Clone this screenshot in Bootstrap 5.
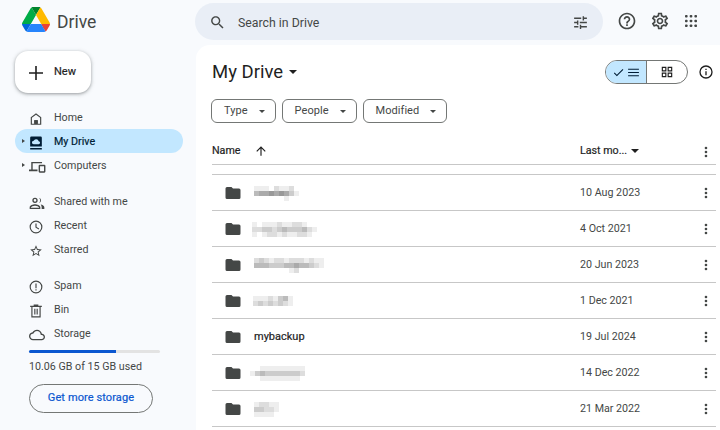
<!DOCTYPE html>
<html>
<head>
    <title>My Drive</title>
    <!-- Bootstrap CSS -->
    <link href="https://cdn.jsdelivr.net/npm/bootstrap@5.3.0/dist/css/bootstrap.min.css" rel="stylesheet">
    <style>
        html, body { height: 430px; overflow: hidden; }
        body { background: #f8fafd; color: #1f1f1f; font-family: Roboto, "Liberation Sans", sans-serif; font-size: 10.7px; }
        svg { display: block; flex: none; fill: currentColor; }
        .medium-text { -webkit-text-stroke: .2px currentColor; }

        /* sidebar */
        .side-col { width: 196px; flex: none; height: 430px; }
        .brand { height: 45px; padding: 7px 0 0 22px; gap: 7px; }
        .brand-name { font-size: 17.5px; color: #444746; line-height: 28px; margin-top: 1px; }
        .new-btn { width: 76px; height: 42px; margin: 6px 0 12px 15px; border-radius: 13px; background: #fff; box-shadow: 0 1px 3px rgba(60,64,67,.4), 0 1px 4px 1px rgba(60,64,67,.12); padding: 1px 0 0 14px; gap: 11px; font-size: 11px; }
        .side-list { padding: 0 13px 0 15px; margin-bottom: 12px; }
        .side-list.first-list { margin-bottom: 13px; }
        .side-item { height: 24px; border-radius: 12px; padding: 1px 0 0 14px; gap: 11px; color: #444746; position: relative; }
        .first-list .side-item { padding-top: 3px; }
        .side-item.current { background: #c2e7ff; color: #001d35; }
        .wide-icon { margin-right: -2px; }
        .laptop-icon { margin-right: -3px; }
        .expand-mark { position: absolute; left: 7px; top: 10px; border-left: 3px solid #444746; border-top: 2.5px solid transparent; border-bottom: 2.5px solid transparent; }
        .quota { margin: 0 36px 0 29px; }
        .quota-track { height: 3px; background: #e3e3e3; margin-top: 4px; border-radius: 2px; }
        .quota-fill { height: 3px; width: 66.5%; background: #0b57d0; border-radius: 2px 0 0 2px; }
        .quota-text { margin-top: 7px; color: #444746; line-height: 13px; white-space: nowrap; }
        .storage-btn { width: 124px; height: 29px; margin-top: 11px; border: 1px solid #747775; border-radius: 15px; color: #0b57d0; background: transparent; padding: 0; font-size: 11px; letter-spacing: .1px; }

        /* top bar */
        .top-bar { height: 45px; }
        .search-box { width: 408px; height: 37px; margin: 3px 0 0 -1px; border-radius: 19px; background: #e9eef6; padding: 2px 14px 0 14px; color: #444746; font-size: 12.3px; }
        .search-box .search-text { margin: 1px 0 0 12px; }
        .top-icons { margin: -3px 0 0 14px; gap: 13px; color: #444746; }
        .apps-icon { margin-left: 1px; }

        /* main panel */
        .drive-panel { height: 385px; background: #fff; border-radius: 14px 0 0 0; padding: 0 4px 0 16px; overflow: hidden; }
        .title-row { height: 54px; }
        .title-text { font-size: 18.5px; color: #1f1f1f; margin: 0; gap: 6px; font-weight: 400; }
        .title-caret { border-top: 4px solid #1f1f1f; border-left: 4px solid transparent; border-right: 4px solid transparent; }
        .view-toggle { width: 83px; height: 24px; border: 1px solid #747775; border-radius: 12px; overflow: hidden; margin-left: auto; }
        .view-list { width: 41px; height: 100%; background: #c2e7ff; border-right: 1px solid #747775; gap: 2px; color: #001d35; }
        .view-grid { flex: 1; height: 100%; color: #1f1f1f; }
        .info-btn { margin: 0 2px 0 10px; }
        .filter-row { gap: 6px; height: 24px; margin-left: -1px; }
        .filter-chip { height: 24px; border: 1px solid #747775; border-radius: 6px; background: #fff; color: #444746; padding: 0 10px 0 12px; gap: 11px; font-size: 11px; letter-spacing: .05px; }
        .chip-caret { border-top: 3px solid #444746; border-left: 3px solid transparent; border-right: 3px solid transparent; }
        .head-caret { border-top: 4px solid #1f1f1f; border-left: 4px solid transparent; border-right: 4px solid transparent; }
        .head-row { height: 42px; padding-top: 16px; border-bottom: 1px solid #c7c7c7; }
        .head-spacer { height: 10px; border-bottom: 1px solid #c7c7c7; }
        .file-row { height: 36px; border-bottom: 1px solid #c7c7c7; color: #444746; padding-top: 1px; }
        .name-cell { width: 368px; flex: none; padding-left: 12px; gap: 12px; }
        .name-cell.no-icon { padding: 0; gap: 14px; }
        .date-cell { flex: 1; }
        .file-name { color: #1f1f1f; font-size: 11px; }
        .mosaic { filter: blur(.6px); }
        .mosaic-line { height: 5px; }
        .mosaic-line i { display: block; width: 5px; height: 5px; }
        .pull-1 { margin-left: -1px; }
        .pull-2 { margin-left: -2px; }
        .pull-4 { margin-left: -4px; }
        .more-btn { color: #444746; margin-right: 2px; }
    </style>
</head>
<body>
<div class="d-flex">
    <!-- Боковая панель -->
    <div class="side-col">
        <div class="brand d-flex align-items-start">
            <svg width="28" height="25" viewBox="0 0 87.3 78">
                <path d="m6.6 66.85 3.85 6.65c.8 1.4 1.95 2.5 3.3 3.3l13.75-23.8h-27.5c0 1.55.4 3.1 1.2 4.5z" fill="#0066da"/>
                <path d="m43.65 25-13.75-23.8c-1.35.8-2.5 1.9-3.3 3.3l-25.4 44a9.06 9.06 0 0 0 -1.2 4.5h27.5z" fill="#00ac47"/>
                <path d="m73.55 76.8c1.35-.8 2.5-1.9 3.3-3.3l1.6-2.75 7.65-13.25c.8-1.4 1.2-2.95 1.2-4.5h-27.502l5.852 11.5z" fill="#ea4335"/>
                <path d="m43.65 25 13.75-23.8c-1.35-.8-2.9-1.2-4.5-1.2h-18.5c-1.6 0-3.15.45-4.5 1.2z" fill="#00832d"/>
                <path d="m59.8 53h-32.3l-13.75 23.8c1.35.8 2.9 1.2 4.5 1.2h50.8c1.6 0 3.15-.45 4.5-1.2z" fill="#2684fc"/>
                <path d="m73.4 26.5-12.7-22c-.8-1.4-1.95-2.5-3.3-3.3l-13.75 23.8 16.15 28h27.45c0-1.55-.4-3.1-1.2-4.5z" fill="#ffba00"/>
            </svg>
            <span class="brand-name">Drive</span>
        </div>

        <div class="new-btn d-flex align-items-center">
            <svg width="14" height="14" viewBox="0 0 14 14"><path d="M6.2 0h1.6v6.2H14v1.6H7.8V14H6.2V7.8H0V6.2h6.2z"/></svg>
            <span class="medium-text">New</span>
        </div>

        <div class="side-list first-list">
            <div class="side-item d-flex align-items-center">
                <svg width="14" height="14" viewBox="0 0 24 24"><path d="M12 2 3 9v13h18V9l-9-7zm7 18h-4v-6H9v6H5v-10l7-5.4 7 5.4v10z"/><path d="M9 14h6v6H9z"/></svg>
                <span>Home</span>
            </div>
            <div class="side-item current d-flex align-items-center">
                <i class="expand-mark"></i>
                <svg width="14" height="14" viewBox="0 0 24 24"><path d="M4 1h16a2 2 0 0 1 2 2v15H2V3a2 2 0 0 1 2-2zm4 13h8.2a2.6 2.6 0 0 0 .4-5.2A4.6 4.6 0 0 0 8 8a3 3 0 0 0 0 6zM2 20.5h20V23H2z"/></svg>
                <span class="medium-text">My Drive</span>
            </div>
            <div class="side-item d-flex align-items-center">
                <i class="expand-mark"></i>
                <svg class="laptop-icon" width="17" height="14" viewBox="0 0 30 24"><path d="M4 3h19v2.500H6.500v11H15v3H0v-3h4V3z"/><path d="M19 8h8a2 2 0 0 1 2 2v10a2 2 0 0 1-2 2h-8a2 2 0 0 1-2-2V10a2 2 0 0 1 2-2zm.5 2.500v9h7v-9z"/></svg>
                <span>Computers</span>
            </div>
        </div>

        <div class="side-list">
            <div class="side-item d-flex align-items-center">
                <svg class="wide-icon" width="16" height="16" viewBox="0 0 24 24"><path d="M9 12a4 4 0 1 0 0-8 4 4 0 0 0 0 8zm0-6a2 2 0 1 1 0 4 2 2 0 0 1 0-4zm0 8c-3 0-8 1.500-8 4.500V21h16v-2.500C17 15.500 12 14 9 14zm-6 5v-.5c0-.9 3.400-2.500 6-2.500s6 1.600 6 2.500v.5H3zM15 4.100a4 4 0 0 1 0 7.800 5.800 5.800 0 0 0 0-7.800zM17.500 14.300c2.700.5 5.500 1.800 5.500 4.200V21h-4v-2.500c0-1.800-.6-3.100-1.500-4.200z"/></svg>
                <span>Shared with me</span>
            </div>
            <div class="side-item d-flex align-items-center">
                <svg width="14" height="14" viewBox="0 0 24 24"><path d="M12 1a11 11 0 1 0 0 22 11 11 0 0 0 0-22zm0 20a9 9 0 1 1 0-18 9 9 0 0 1 0 18z"/><path d="M13 6h-2v7l5.500 3.300 1-1.600-4.500-2.700z"/></svg>
                <span>Recent</span>
            </div>
            <div class="side-item d-flex align-items-center">
                <svg width="14" height="14" viewBox="0 0 24 24"><path d="M22 9.240l-7.190-.62L12 2 9.190 8.630 2 9.240l5.460 4.730L5.820 21 12 17.270 18.180 21l-1.630-7.030L22 9.240zM12 15.400l-3.760 2.270 1-4.280-3.320-2.880 4.380-.38L12 6.100l1.710 4.040 4.380.38-3.320 2.880 1 4.280L12 15.400z"/></svg>
                <span>Starred</span>
            </div>
        </div>

        <div class="side-list mb-0">
            <div class="side-item d-flex align-items-center">
                <svg width="14" height="14" viewBox="0 0 24 24"><path d="M12 1a11 11 0 1 0 0 22 11 11 0 0 0 0-22zm0 20a9 9 0 1 1 0-18 9 9 0 0 1 0 18z"/><path d="M11 6h2v8h-2zM11 16h2v2h-2z"/></svg>
                <span>Spam</span>
            </div>
            <div class="side-item d-flex align-items-center">
                <svg width="14" height="14" viewBox="0 0 24 24"><path d="M8 1h8v2h6v2h-2v18H4V5H2V3h6V1zM6 5v16h12V5H6zm3 3h2v10H9V8zm4 0h2v10h-2V8z"/></svg>
                <span>Bin</span>
            </div>
            <div class="side-item d-flex align-items-center">
                <svg class="wide-icon" width="16" height="16" viewBox="0 0 24 24"><path d="M19.350 10.040C18.670 6.590 15.640 4 12 4 9.110 4 6.600 5.640 5.350 8.040 2.340 8.360 0 10.910 0 14c0 3.310 2.690 6 6 6h13c2.760 0 5-2.240 5-5 0-2.640-2.050-4.780-4.650-4.960zM19 18H6c-2.210 0-4-1.790-4-4 0-2.050 1.530-3.760 3.560-3.970l1.070-.11.5-.95C8.080 7.140 9.940 6 12 6c2.620 0 4.880 1.860 5.390 4.430l.3 1.500 1.530.11c1.560.1 2.780 1.410 2.780 2.960 0 1.650-1.350 3-3 3z"/></svg>
                <span>Storage</span>
            </div>
        </div>

        <div class="quota">
            <div class="quota-track"><div class="quota-fill"></div></div>
            <div class="quota-text">10.06 GB of 15 GB used</div>
            <button class="storage-btn d-block medium-text">Get more storage</button>
        </div>
    </div>

    <!-- Основная панель -->
    <div class="flex-grow-1">
        <div class="top-bar d-flex align-items-center">
            <div class="search-box d-flex align-items-center align-self-start">
                <svg width="17" height="17" viewBox="0 0 24 24"><path d="M15.500 14h-.79l-.28-.27C15.410 12.590 16 11.110 16 9.500 16 5.910 13.090 3 9.500 3S3 5.910 3 9.500 5.910 16 9.500 16c1.610 0 3.090-.59 4.230-1.570l.27.28v.79l5 4.990L20.490 19l-4.990-5zm-6 0C7.010 14 5 11.990 5 9.500S7.010 5 9.500 5 14 7.010 14 9.500 11.990 14 9.500 14z"/></svg>
                <span class="search-text flex-grow-1">Search in Drive</span>
                <svg width="17" height="17" viewBox="0 0 24 24"><path d="M3 17v2h6v-2H3zM3 5v2h10V5H3zm10 16v-2h8v-2h-8v-2h-2v6h2zM7 9v2H3v2h4v2h2V9H7zm14 4v-2H11v2h10zm-6-4h2V7h4V5h-4V3h-2v6z"/></svg>
            </div>
            <div class="top-icons d-flex align-items-center">
                <svg width="20" height="20" viewBox="0 0 24 24"><path d="M11 18h2v-2h-2v2zm1-16C6.480 2 2 6.480 2 12s4.480 10 10 10 10-4.480 10-10S17.520 2 12 2zm0 18c-4.410 0-8-3.590-8-8s3.590-8 8-8 8 3.590 8 8-3.590 8-8 8zm0-14c-2.210 0-4 1.790-4 4h2c0-1.100.9-2 2-2s2 .9 2 2c0 2-3 1.750-3 5h2c0-2.250 3-2.500 3-5 0-2.210-1.790-4-4-4z"/></svg>
                <svg width="20" height="20" viewBox="0 0 24 24"><path d="M19.430 12.980c.04-.32.07-.64.07-.98 0-.34-.03-.66-.07-.98l2.110-1.650c.19-.15.24-.42.12-.64l-2-3.460c-.09-.16-.26-.25-.44-.25-.06 0-.12.01-.17.03l-2.490 1c-.52-.4-1.080-.73-1.690-.98l-.38-2.650C14.460 2.180 14.250 2 14 2h-4c-.25 0-.46.18-.49.42l-.38 2.650c-.61.25-1.170.59-1.690.98l-2.490-1c-.06-.02-.12-.03-.18-.03-.17 0-.34.09-.43.25l-2 3.460c-.13.22-.07.49.12.64l2.110 1.650c-.04.32-.07.65-.07.98 0 .33.03.66.07.98l-2.110 1.650c-.19.15-.24.42-.12.64l2 3.460c.09.16.26.25.44.25.06 0 .12-.01.17-.03l2.490-1c.52.4 1.080.73 1.690.98l.38 2.650c.03.24.24.42.49.42h4c.25 0 .46-.18.49-.42l.38-2.650c.61-.25 1.170-.59 1.690-.98l2.490 1c.06.02.12.03.18.03.17 0 .34-.09.43-.25l2-3.460c.12-.22.07-.49-.12-.64l-2.110-1.650zm-1.980-1.710c.04.31.05.52.05.73 0 .21-.02.43-.05.73l-.14 1.130.89.7 1.080.84-.7 1.210-1.270-.51-1.040-.42-.9.68c-.43.32-.84.56-1.250.73l-1.060.43-.16 1.130-.2 1.350h-1.400l-.19-1.350-.16-1.130-1.060-.43c-.43-.18-.83-.41-1.230-.71l-.91-.7-1.060.43-1.270.51-.7-1.210 1.080-.84.89-.7-.14-1.130c-.03-.31-.05-.54-.05-.74s.02-.43.05-.73l.14-1.130-.89-.7-1.080-.84.7-1.210 1.270.51 1.040.42.9-.68c.43-.32.84-.56 1.250-.73l1.060-.43.16-1.130.2-1.350h1.390l.19 1.350.16 1.130 1.060.43c.43.18.83.41 1.230.71l.91.7 1.060-.43 1.270-.51.7 1.210-1.070.85-.89.7.14 1.130zM12 8c-2.210 0-4 1.790-4 4s1.790 4 4 4 4-1.790 4-4-1.790-4-4-4zm0 6c-1.100 0-2-.9-2-2s.9-2 2-2 2 .9 2 2-.9 2-2 2z"/></svg>
                <svg class="apps-icon" width="14" height="14" viewBox="0 0 14 14"><rect x="1" y="1" width="2.600" height="2.600" rx=".8"/><rect x="5.700" y="1" width="2.600" height="2.600" rx=".8"/><rect x="10.400" y="1" width="2.600" height="2.600" rx=".8"/><rect x="1" y="5.700" width="2.600" height="2.600" rx=".8"/><rect x="5.700" y="5.700" width="2.600" height="2.600" rx=".8"/><rect x="10.400" y="5.700" width="2.600" height="2.600" rx=".8"/><rect x="1" y="10.400" width="2.600" height="2.600" rx=".8"/><rect x="5.700" y="10.400" width="2.600" height="2.600" rx=".8"/><rect x="10.400" y="10.400" width="2.600" height="2.600" rx=".8"/></svg>
            </div>
        </div>

        <div class="drive-panel">
            <div class="title-row d-flex align-items-center">
                <h1 class="title-text d-flex align-items-center">My Drive <span class="title-caret"></span></h1>
                <div class="view-toggle d-flex">
                    <div class="view-list d-flex align-items-center justify-content-center">
                        <svg width="13" height="13" viewBox="0 0 24 24"><path d="M9 16.200 4.800 12l-1.400 1.400L9 19 21 7l-1.400-1.400z"/></svg>
                        <svg width="13" height="13" viewBox="0 0 24 24"><path d="M2 5h20v2H2zM2 11h20v2H2zM2 17h20v2H2z"/></svg>
                    </div>
                    <div class="view-grid d-flex align-items-center justify-content-center">
                        <svg width="14" height="14" viewBox="0 0 24 24"><path d="M3 3h8v8H3zm2 2v4h4V5zM13 3h8v8h-8zm2 2v4h4V5zM3 13h8v8H3zm2 2v4h4v-4zM13 13h8v8h-8zm2 2v4h4v-4z"/></svg>
                    </div>
                </div>
                <svg class="info-btn" width="16" height="16" viewBox="0 0 24 24"><path d="M12 2a10 10 0 1 0 0 20 10 10 0 0 0 0-20zm0 18a8 8 0 1 1 0-16 8 8 0 0 1 0 16z"/><path d="M11 11h2v6h-2zM11 7h2v2h-2z"/></svg>
            </div>

            <div class="filter-row d-flex">
                <div class="filter-chip d-flex align-items-center">Type <i class="chip-caret"></i></div>
                <div class="filter-chip d-flex align-items-center">People <i class="chip-caret"></i></div>
                <div class="filter-chip d-flex align-items-center">Modified <i class="chip-caret"></i></div>
            </div>

            <div class="head-row d-flex align-items-center">
                <div class="name-cell no-icon d-flex align-items-center">
                    <span class="medium-text">Name</span>
                    <svg width="14" height="14" viewBox="0 0 24 24"><path d="M4 12l1.400 1.400L11 7.800V20h2V7.800l5.600 5.600L20 12l-8-8z"/></svg>
                </div>
                <div class="date-cell d-flex align-items-center gap-1"><span class="medium-text">Last mo...</span> <i class="head-caret"></i></div>
                <svg class="more-btn" width="16" height="16" viewBox="0 0 24 24"><path d="M12 8a2 2 0 1 0 0-4 2 2 0 0 0 0 4zm0 2a2 2 0 1 0 0 4 2 2 0 0 0 0-4zm0 6a2 2 0 1 0 0 4 2 2 0 0 0 0-4z"/></svg>
            </div>
            <div class="head-spacer"></div>

            <div class="file-row d-flex align-items-center">
                <div class="name-cell d-flex align-items-center">
                    <svg width="18" height="18" viewBox="0 0 24 24"><path d="M10 4H4a2 2 0 0 0-2 2v12a2 2 0 0 0 2 2h16a2 2 0 0 0 2-2V8a2 2 0 0 0-2-2h-8l-2-2z" fill="#444746"/></svg>
                    <div class="mosaic" data-cells="e e e f d e e d f|b a a 9 a 9 a c e|f f f f f f e f f"></div>
                </div>
                <div class="date-cell">10 Aug 2023</div>
                <svg class="more-btn" width="16" height="16" viewBox="0 0 24 24"><path d="M12 8a2 2 0 1 0 0-4 2 2 0 0 0 0 4zm0 2a2 2 0 1 0 0 4 2 2 0 0 0 0-4zm0 6a2 2 0 1 0 0 4 2 2 0 0 0 0-4z"/></svg>
            </div>
            <div class="file-row d-flex align-items-center">
                <div class="name-cell d-flex align-items-center">
                    <svg width="18" height="18" viewBox="0 0 24 24"><path d="M10 4H4a2 2 0 0 0-2 2v12a2 2 0 0 0 2 2h16a2 2 0 0 0 2-2V8a2 2 0 0 0-2-2h-8l-2-2z" fill="#444746"/></svg>
                    <div class="mosaic pull-2" data-cells="e f e e e d e e d d e f f|d d c c d c b c c c b d e|e f e d d e d e e d d e f"></div>
                </div>
                <div class="date-cell">4 Oct 2021</div>
                <svg class="more-btn" width="16" height="16" viewBox="0 0 24 24"><path d="M12 8a2 2 0 1 0 0-4 2 2 0 0 0 0 4zm0 2a2 2 0 1 0 0 4 2 2 0 0 0 0-4zm0 6a2 2 0 1 0 0 4 2 2 0 0 0 0-4z"/></svg>
            </div>
            <div class="file-row d-flex align-items-center">
                <div class="name-cell d-flex align-items-center">
                    <svg width="18" height="18" viewBox="0 0 24 24"><path d="M10 4H4a2 2 0 0 0-2 2v12a2 2 0 0 0 2 2h16a2 2 0 0 0 2-2V8a2 2 0 0 0-2-2h-8l-2-2z" fill="#444746"/></svg>
                    <div class="mosaic" data-cells="d c d e d d e d d d e d e e|b b b c c c b b a b b c d e|f f f f f f f e d f f f f f"></div>
                </div>
                <div class="date-cell">20 Jun 2023</div>
                <svg class="more-btn" width="16" height="16" viewBox="0 0 24 24"><path d="M12 8a2 2 0 1 0 0-4 2 2 0 0 0 0 4zm0 2a2 2 0 1 0 0 4 2 2 0 0 0 0-4zm0 6a2 2 0 1 0 0 4 2 2 0 0 0 0-4z"/></svg>
            </div>
            <div class="file-row d-flex align-items-center">
                <div class="name-cell d-flex align-items-center">
                    <svg width="18" height="18" viewBox="0 0 24 24"><path d="M10 4H4a2 2 0 0 0-2 2v12a2 2 0 0 0 2 2h16a2 2 0 0 0 2-2V8a2 2 0 0 0-2-2h-8l-2-2z" fill="#444746"/></svg>
                    <div class="mosaic pull-1" data-cells="e e e d e c b e|d c d c d c d e"></div>
                </div>
                <div class="date-cell">1 Dec 2021</div>
                <svg class="more-btn" width="16" height="16" viewBox="0 0 24 24"><path d="M12 8a2 2 0 1 0 0-4 2 2 0 0 0 0 4zm0 2a2 2 0 1 0 0 4 2 2 0 0 0 0-4zm0 6a2 2 0 1 0 0 4 2 2 0 0 0 0-4z"/></svg>
            </div>
            <div class="file-row d-flex align-items-center">
                <div class="name-cell d-flex align-items-center">
                    <svg width="18" height="18" viewBox="0 0 24 24"><path d="M10 4H4a2 2 0 0 0-2 2v12a2 2 0 0 0 2 2h16a2 2 0 0 0 2-2V8a2 2 0 0 0-2-2h-8l-2-2z" fill="#444746"/></svg>
                    <span class="file-name medium-text">mybackup</span>
                </div>
                <div class="date-cell">19 Jul 2024</div>
                <svg class="more-btn" width="16" height="16" viewBox="0 0 24 24"><path d="M12 8a2 2 0 1 0 0-4 2 2 0 0 0 0 4zm0 2a2 2 0 1 0 0 4 2 2 0 0 0 0-4zm0 6a2 2 0 1 0 0 4 2 2 0 0 0 0-4z"/></svg>
            </div>
            <div class="file-row d-flex align-items-center">
                <div class="name-cell d-flex align-items-center">
                    <svg width="18" height="18" viewBox="0 0 24 24"><path d="M10 4H4a2 2 0 0 0-2 2v12a2 2 0 0 0 2 2h16a2 2 0 0 0 2-2V8a2 2 0 0 0-2-2h-8l-2-2z" fill="#444746"/></svg>
                    <div class="mosaic pull-4" data-cells="f f e e e e e e e e e f|e c b c c c c c c c d f|f f e e e e e e e e f f"></div>
                </div>
                <div class="date-cell">14 Dec 2022</div>
                <svg class="more-btn" width="16" height="16" viewBox="0 0 24 24"><path d="M12 8a2 2 0 1 0 0-4 2 2 0 0 0 0 4zm0 2a2 2 0 1 0 0 4 2 2 0 0 0 0-4zm0 6a2 2 0 1 0 0 4 2 2 0 0 0 0-4z"/></svg>
            </div>
            <div class="file-row d-flex align-items-center">
                <div class="name-cell d-flex align-items-center">
                    <svg width="18" height="18" viewBox="0 0 24 24"><path d="M10 4H4a2 2 0 0 0-2 2v12a2 2 0 0 0 2 2h16a2 2 0 0 0 2-2V8a2 2 0 0 0-2-2h-8l-2-2z" fill="#444746"/></svg>
                    <div class="mosaic" data-cells="e d d e e|c c d d e|e e e e f"></div>
                </div>
                <div class="date-cell">21 Mar 2022</div>
                <svg class="more-btn" width="16" height="16" viewBox="0 0 24 24"><path d="M12 8a2 2 0 1 0 0-4 2 2 0 0 0 0 4zm0 2a2 2 0 1 0 0 4 2 2 0 0 0 0-4zm0 6a2 2 0 1 0 0 4 2 2 0 0 0 0-4z"/></svg>
            </div>
        </div>
    </div>
</div>

<!-- Bootstrap JS -->
<script src="https://cdn.jsdelivr.net/npm/bootstrap@5.3.0/dist/js/bootstrap.bundle.min.js"></script>

<!-- Размытые имена папок: рисуем мозаику из данных -->
<script>
    document.querySelectorAll('.mosaic').forEach(function (box) {
        box.dataset.cells.split('|').forEach(function (line) {
            const row = document.createElement('div');
            row.className = 'mosaic-line d-flex';
            line.split(' ').forEach(function (g) {
                const cell = document.createElement('i');
                cell.style.background = '#' + g + g + g + g + g + g;
                row.appendChild(cell);
            });
            box.appendChild(row);
        });
    });
</script>
</body>
</html>
